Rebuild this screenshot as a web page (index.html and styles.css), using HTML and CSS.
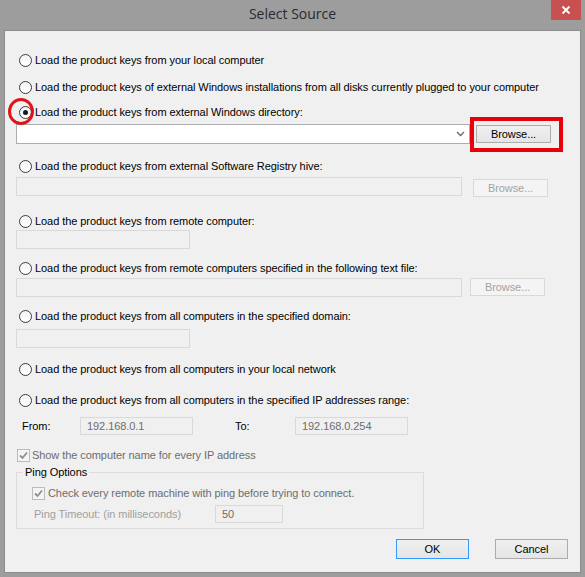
FILE: index.html
```html
<!DOCTYPE html>
<html>
<head>
<meta charset="utf-8">
<link rel="stylesheet" href="styles.css">
</head>
<body>
<div class="window">
  <div class="titlebar">
    <span class="title">Select Source</span>
    <div class="close"><svg width="10" height="10" viewBox="0 0 10 10"><path d="M1.5 1.5 L8.5 8.5 M8.5 1.5 L1.5 8.5" stroke="#fff" stroke-width="1.8"/></svg></div>
  </div>
  <div class="client">
    <div class="opt r1"><span class="radio"></span><span>Load the product keys from your local computer</span></div>
    <div class="opt r2"><span class="radio"></span><span>Load the product keys of external Windows installations from all disks currently plugged to your computer</span></div>
    <div class="opt r3"><span class="radio checked"></span><span>Load the product keys from external Windows directory:</span><span class="mark-circle"></span></div>
    <div class="field-row combo-row">
      <div class="combo"><svg class="chev" width="9" height="6" viewBox="0 0 9 6"><path d="M1 1 L4.5 4.5 L8 1" fill="none" stroke="#6b6b6b" stroke-width="1.4"/></svg></div>
      <div class="btn browse1">Browse...<span class="mark-rect"></span></div>
    </div>
    <div class="opt r4"><span class="radio"></span><span>Load the product keys from external Software Registry hive:</span></div>
    <div class="field-row row-hive">
      <div class="input wide"></div>
      <div class="btn disabled browse2">Browse...</div>
    </div>
    <div class="opt r5"><span class="radio"></span><span>Load the product keys from remote computer:</span></div>
    <div class="field-row row-remote"><div class="input short"></div></div>
    <div class="opt r6"><span class="radio"></span><span>Load the product keys from remote computers specified in the following text file:</span></div>
    <div class="field-row row-file">
      <div class="input wide"></div>
      <div class="btn disabled browse3">Browse...</div>
    </div>
    <div class="opt r7"><span class="radio"></span><span>Load the product keys from all computers in the specified domain:</span></div>
    <div class="field-row row-domain"><div class="input short"></div></div>
    <div class="opt r8"><span class="radio"></span><span>Load the product keys from all computers in your local network</span></div>
    <div class="opt r9"><span class="radio"></span><span>Load the product keys from all computers in the specified IP addresses range:</span></div>
    <div class="range-row">
      <span class="lbl-from">From:</span>
      <div class="input ip">192.168.0.1</div>
      <span class="lbl-to">To:</span>
      <div class="input ip">192.168.0.254</div>
    </div>
    <div class="check-row show-name">
      <span class="checkbox"><svg width="11" height="11" viewBox="0 0 11 11"><path d="M2 5.5 L4.5 8 L9 2.5" fill="none" stroke="#8e8e8e" stroke-width="1.8"/></svg></span>
      <span class="dis-text">Show the computer name for every IP address</span>
    </div>
    <div class="group">
      <div class="group-label">Ping Options</div>
      <div class="check-row ping-check">
        <span class="checkbox"><svg width="11" height="11" viewBox="0 0 11 11"><path d="M2 5.5 L4.5 8 L9 2.5" fill="none" stroke="#8e8e8e" stroke-width="1.8"/></svg></span>
        <span class="dis-text">Check every remote machine with ping before trying to connect.</span>
      </div>
      <div class="timeout-row">
        <span class="light-text">Ping Timeout: (in milliseconds)</span>
        <div class="input timeout">50</div>
      </div>
    </div>
    <div class="buttons">
      <div class="btn ok">OK</div>
      <div class="btn cancel">Cancel</div>
    </div>
  </div>
</div>
</body>
</html>
```
FILE: styles.css
```css
html, body {
  margin: 0;
  padding: 0;
}
body {
  width: 585px;
  height: 577px;
  background: #9d9d9d;
  font-family: "Liberation Sans", Arial, sans-serif;
  font-size: 11px;
  letter-spacing: -0.07px;
  color: #000;
  overflow: hidden;
}
.window {
  width: 585px;
  height: 577px;
  display: flex;
  flex-direction: column;
}
.titlebar {
  height: 30px;
  position: relative;
  display: flex;
  justify-content: center;
  align-items: center;
}
.title {
  font-family: "Open Sans", "Noto Sans", sans-serif;
  font-size: 14px;
  letter-spacing: 0;
  color: #2a2a2a;
  margin-top: -3px;
}
.close {
  position: absolute;
  top: 0;
  right: 4px;
  width: 30px;
  height: 20px;
  background: #c75050;
  display: flex;
  align-items: center;
  justify-content: center;
}
.client {
  margin: 0 4px 4px 4px;
  height: 543px;
  box-sizing: border-box;
  background: #f0f0f0;
  border: 1px solid #8c8c8c;
  padding-left: 11px;
  display: flex;
  flex-direction: column;
}
.opt {
  height: 14px;
  display: flex;
  align-items: center;
  position: relative;
  white-space: nowrap;
}
.radio {
  width: 11px;
  height: 11px;
  border: 1px solid #3c3c3c;
  border-radius: 50%;
  background: linear-gradient(#f4f4f4, #ffffff);
  margin-left: 3px;
  margin-right: 3px;
  flex: none;
  position: relative;
}
.radio.checked::after {
  content: "";
  position: absolute;
  left: 3px;
  top: 3px;
  width: 5px;
  height: 5px;
  border-radius: 50%;
  background: #1a1a1a;
}
.mark-circle {
  position: absolute;
  left: -8px;
  top: -7px;
  width: 20px;
  height: 21px;
  border: 3px solid #e0141b;
  border-radius: 50%;
}
.r1 { margin-top: 22px; }
.r2 { margin-top: 13px; }
.r3 { margin-top: 11px; }
.r4 { margin-top: 15px; }
.r5 { margin-top: 17px; }
.r6 { margin-top: 12px; }
.r7 { margin-top: 12px; }
.r8 { margin-top: 14px; }
.r9 { margin-top: 17px; }

.field-row {
  display: flex;
  align-items: flex-start;
}
.combo-row { margin-top: 5px; height: 20px; align-items: center; }
.row-hive { margin-top: 4px; height: 20px; }
.row-remote { margin-top: 2px; }
.row-file { margin-top: 3px; height: 19px; }
.row-domain { margin-top: 6px; }

.combo {
  width: 454px;
  height: 20px;
  box-sizing: border-box;
  background: #fff;
  border: 1px solid #abadb3;
  display: flex;
  justify-content: flex-end;
  align-items: center;
  padding-right: 4px;
}
.input {
  box-sizing: border-box;
  height: 19px;
  background: #f0f0f0;
  border: 1px solid #d9d9d9;
}
.input.wide { width: 446px; }
.input.short { width: 174px; }

.btn {
  box-sizing: border-box;
  display: flex;
  align-items: center;
  justify-content: center;
  border: 1px solid #acacac;
  background: linear-gradient(#f0f0f0, #e5e5e5);
  color: #000;
  position: relative;
}
.btn.disabled {
  background: #f4f4f4;
  border-color: #d9d9d9;
  color: #a3a3a3;
}
.browse1 {
  width: 75px;
  height: 18px;
  margin-left: 6px;
}
.mark-rect {
  position: absolute;
  left: -7px;
  top: -9px;
  width: 85px;
  height: 27px;
  border: 4px solid #e8000b;
}
.browse2 {
  width: 75px;
  height: 18px;
  margin-left: 11px;
  margin-top: 2px;
}
.browse3 {
  width: 75px;
  height: 18px;
  margin-left: 8px;
}

.range-row {
  margin-top: 10px;
  height: 18px;
  display: flex;
  align-items: center;
}
.lbl-from { margin-left: 6px; width: 58px; }
.lbl-to { margin-left: 42px; width: 60px; }
.input.ip {
  width: 113px;
  height: 18px;
  color: #6d6d6d;
  padding-left: 6px;
  display: flex;
  align-items: center;
}

.check-row {
  display: flex;
  align-items: center;
  height: 14px;
  white-space: nowrap;
}
.show-name { margin-top: 13px; }
.checkbox {
  box-sizing: border-box;
  width: 13px;
  height: 13px;
  border: 1px solid #bcbcbc;
  background: #f4f4f4;
  display: flex;
  align-items: center;
  justify-content: center;
  flex: none;
}
.show-name .checkbox { margin-left: 1px; margin-right: 2px; }
.dis-text { color: #6d6d6d; }
.light-text { color: #a0a0a0; }

.group {
  margin-top: 10px;
  width: 408px;
  height: 57px;
  box-sizing: border-box;
  border: 1px solid #dcdcdc;
  display: flex;
  flex-direction: column;
}
.group-label {
  margin-top: -8px;
  margin-left: 6px;
  padding: 0 2px;
  line-height: 14px;
  height: 14px;
  background: #f0f0f0;
  align-self: flex-start;
}
.ping-check { margin-top: 7px; }
.ping-check .checkbox { margin-left: 15px; margin-right: 3px; }
.timeout-row {
  margin-top: 5px;
  height: 18px;
  display: flex;
  align-items: center;
}
.timeout-row .light-text { margin-left: 17px; width: 181px; }
.input.timeout {
  width: 68px;
  height: 18px;
  color: #6d6d6d;
  padding-left: 6px;
  display: flex;
  align-items: center;
}

.buttons {
  margin-top: 10px;
  display: flex;
  justify-content: flex-end;
  padding-right: 12px;
  gap: 26px;
}
.btn.ok, .btn.cancel {
  width: 73px;
  height: 20px;
}
.btn.ok {
  border-color: #3399ff;
}
```
